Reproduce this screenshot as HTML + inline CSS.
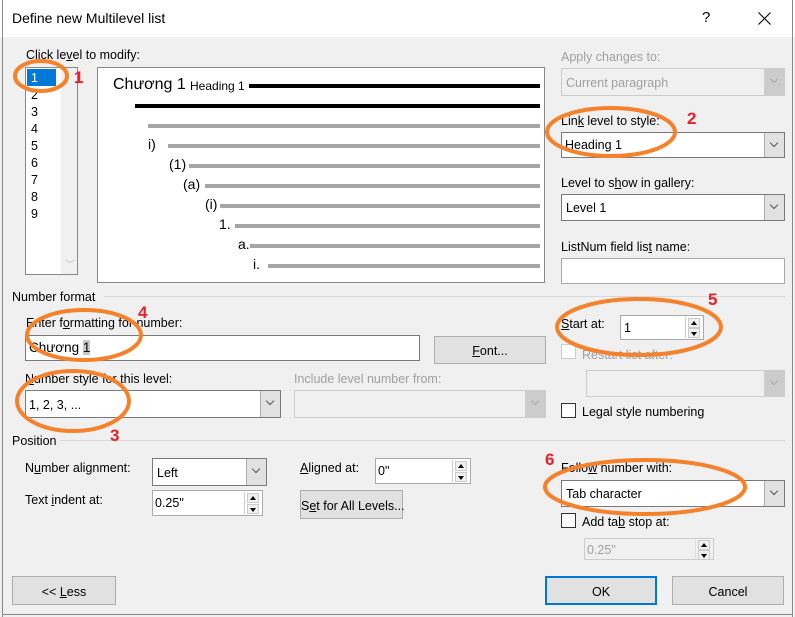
<!DOCTYPE html>
<html><head><meta charset="utf-8"><style>
*{margin:0;padding:0;box-sizing:border-box}
body{width:795px;height:617px;background:#f0f0f0;font-family:"Liberation Sans",sans-serif;font-size:12.5px;color:#000;position:relative;overflow:hidden}
.a{position:absolute;white-space:nowrap}
.box{position:absolute;background:#fff;border:1px solid #7a7a7a}
.dis{position:absolute;background:#f0f0f0;border:1px solid #ccc}
.dd{position:absolute;top:0;right:0;bottom:0;width:20px;background:#e1e1e1;border-left:1px solid #adadad}
.dd:after{content:"";position:absolute;left:6px;top:7px;width:5px;height:5px;border-right:1px solid #555;border-bottom:1px solid #555;transform:rotate(45deg)}
.dis .dd{background:#ccc;border-left:1px solid #ccc}
.dis .dd:after{border-color:#aaa}
.btn{position:absolute;background:#e1e1e1;border:1px solid #adadad;text-align:center;white-space:nowrap}
.gray{color:#a0a0a0}
.spin{position:absolute;top:1px;right:1px;bottom:1px;width:17px;border-left:1px solid #ccc}
.spin i{position:absolute;left:2px;width:12px;height:10px;background:#f0f0f0;border:1px solid #ccc}
.up:after,.dn:after{content:"";position:absolute;left:2px;border-left:3.5px solid transparent;border-right:3.5px solid transparent}
.up:after{top:2px;border-bottom:4px solid #000}
.dn:after{top:3px;border-top:4px solid #000}
.chk{position:absolute;width:15px;height:15px;background:#fff;border:1px solid #333}
.bar{position:absolute;height:4px;background:#a6a6a6}
.bk{position:absolute;height:4px;background:#000}
.sep{position:absolute;height:1px;background:#d8d8d8}
u{text-decoration:underline}
</style></head><body>
<div class="a" style="left:0;top:0;width:795px;height:37px;background:#fff"></div>
<div class="a" style="left:2px;top:0;width:1px;height:617px;background:#888"></div>
<div class="a" style="left:792px;top:0;width:1px;height:617px;background:#888"></div>
<div class="a" style="left:2px;top:614px;width:791px;height:1px;background:#888"></div>
<div class="a" style="left:12px;top:10px;font-size:14px">Define new Multilevel list</div>
<div class="a" style="left:702px;top:9px;font-size:15px">?</div>
<svg class="a" style="left:758px;top:12px" width="13" height="13"><path d="M0.5 0.5L12.5 12.5M12.5 0.5L0.5 12.5" stroke="#000" stroke-width="1.1"/></svg>

<div class="a" style="left:26px;top:48px">Click le<u>v</u>el to modify:</div>
<div class="box" style="left:25px;top:67px;width:53px;height:208px;border-color:#888">
 <div class="a" style="left:35px;top:0;width:16px;height:206px;background:#f0f0f0"></div>
 <div class="a" style="left:1px;top:1px;width:29px;height:17px;background:#0078d7"></div>
 <div class="a" style="left:5px;top:3px;color:#fff">1</div>
 <div class="a" style="left:5px;top:20px">2</div>
 <div class="a" style="left:5px;top:37px">3</div>
 <div class="a" style="left:5px;top:54px">4</div>
 <div class="a" style="left:5px;top:71px">5</div>
 <div class="a" style="left:5px;top:88px">6</div>
 <div class="a" style="left:5px;top:105px">7</div>
 <div class="a" style="left:5px;top:122px">8</div>
 <div class="a" style="left:5px;top:139px">9</div>
 <div class="a" style="left:39px;top:188px;color:#bbb;font-size:10px">﹀</div>
</div>

<div class="box" style="left:97px;top:67px;width:448px;height:216px;border-color:#888">
 <div class="a" style="left:15px;top:8px;font-size:16px">Chương 1</div>
 <div class="a" style="left:92px;top:11px;font-size:12px">Heading 1</div>
 <div class="bk" style="left:151px;top:16px;width:291px"></div>
 <div class="bk" style="left:37px;top:36px;width:405px"></div>
 <div class="bar" style="left:50px;top:56px;width:392px"></div>
 <div class="a" style="left:50px;top:68px;font-size:14px">i)</div>
 <div class="bar" style="left:70px;top:76px;width:372px"></div>
 <div class="a" style="left:71px;top:88px;font-size:14px">(1)</div>
 <div class="bar" style="left:91px;top:96px;width:351px"></div>
 <div class="a" style="left:85px;top:108px;font-size:14px">(a)</div>
 <div class="bar" style="left:107px;top:116px;width:335px"></div>
 <div class="a" style="left:107px;top:128px;font-size:14px">(i)</div>
 <div class="bar" style="left:122px;top:136px;width:320px"></div>
 <div class="a" style="left:121px;top:148px;font-size:14px">1.</div>
 <div class="bar" style="left:137px;top:156px;width:305px"></div>
 <div class="a" style="left:140px;top:168px;font-size:14px">a.</div>
 <div class="bar" style="left:152px;top:176px;width:290px"></div>
 <div class="a" style="left:155px;top:188px;font-size:14px">i.</div>
 <div class="bar" style="left:170px;top:196px;width:272px"></div>
</div>

<div class="a gray" style="left:561px;top:50px">Apply changes to:</div>
<div class="dis" style="left:561px;top:68px;width:224px;height:28px"><div class="a gray" style="left:4px;top:7px">Current paragraph</div><div class="dd"></div></div>
<div class="a" style="left:561px;top:114px">Lin<u>k</u> level to style:</div>
<div class="box" style="left:561px;top:132px;width:224px;height:26px"><div class="a" style="left:3px;top:5px">Heading 1</div><div class="dd"></div></div>
<div class="a" style="left:561px;top:176px">Level to s<u>h</u>ow in gallery:</div>
<div class="box" style="left:561px;top:194px;width:224px;height:27px"><div class="a" style="left:4px;top:6px">Level 1</div><div class="dd"></div></div>
<div class="a" style="left:561px;top:240px">ListNum field lis<u>t</u> name:</div>
<div class="box" style="left:561px;top:258px;width:224px;height:26px;border-color:#aaa"></div>

<div class="a" style="left:12px;top:290px">Number format</div>
<div class="sep" style="left:104px;top:296px;width:681px"></div>
<div class="a" style="left:26px;top:316px">Enter f<u>o</u>rmatting for number:</div>
<div class="box" style="left:25px;top:335px;width:395px;height:26px"><div class="a" style="left:3px;top:4px;font-size:13.5px">Chương <span style="background:#c8c8c8">1</span></div></div>
<div class="btn" style="left:434px;top:336px;width:112px;height:28px;padding-top:7px"><u>F</u>ont...</div>

<div class="a" style="left:561px;top:317px"><u>S</u>tart at:</div>
<div class="box" style="left:620px;top:315px;width:84px;height:25px;border-color:#aaa"><div class="a" style="left:3px;top:5px">1</div><div class="spin"><i class="up" style="top:1px"></i><i class="dn" style="top:11px"></i></div></div>
<div class="chk" style="left:561px;top:344px;border-color:#ccc"></div>
<div class="a gray" style="left:582px;top:348px">Restart list after:</div>
<div class="dis" style="left:586px;top:370px;width:199px;height:27px"><div class="dd"></div></div>
<div class="chk" style="left:561px;top:403px"></div>
<div class="a" style="left:582px;top:405px">Le<u>g</u>al style numbering</div>

<div class="a" style="left:25px;top:372px"><u>N</u>umber style for this level:</div>
<div class="box" style="left:25px;top:390px;width:256px;height:28px"><div class="a" style="left:3px;top:7px">1, 2, 3, ...</div><div class="dd"></div></div>
<div class="a gray" style="left:294px;top:372px">Include level number from:</div>
<div class="dis" style="left:294px;top:390px;width:252px;height:28px"><div class="dd"></div></div>

<div class="a" style="left:12px;top:434px">Position</div>
<div class="sep" style="left:60px;top:440px;width:725px"></div>
<div class="a" style="left:25px;top:461px">N<u>u</u>mber alignment:</div>
<div class="box" style="left:152px;top:458px;width:115px;height:28px"><div class="a" style="left:4px;top:7px">Left</div><div class="dd"></div></div>
<div class="a" style="left:300px;top:461px"><u>A</u>ligned at:</div>
<div class="box" style="left:375px;top:458px;width:96px;height:26px;border-color:#aaa"><div class="a" style="left:2px;top:5px">0"</div><div class="spin"><i class="up" style="top:1px"></i><i class="dn" style="top:12px"></i></div></div>
<div class="a" style="left:25px;top:493px">Text <u>i</u>ndent at:</div>
<div class="box" style="left:152px;top:490px;width:111px;height:26px;border-color:#aaa"><div class="a" style="left:2px;top:5px">0.25"</div><div class="spin"><i class="up" style="top:1px"></i><i class="dn" style="top:12px"></i></div></div>
<div class="btn" style="left:300px;top:490px;width:103px;height:29px;padding-top:8px">S<u>e</u>t for All Levels...</div>

<div class="a" style="left:561px;top:461px">Follo<u>w</u> number with:</div>
<div class="box" style="left:561px;top:480px;width:224px;height:27px"><div class="a" style="left:4px;top:6px">Tab character</div><div class="dd"></div></div>
<div class="chk" style="left:561px;top:513px"></div>
<div class="a" style="left:582px;top:515px">Add ta<u>b</u> stop at:</div>
<div class="box" style="left:584px;top:538px;width:130px;height:22px;border-color:#ccc;background:#f0f0f0"><div class="a gray" style="left:2px;top:4px">0.25"</div><div class="spin" style="border-left-color:#ddd"><i class="up" style="top:0;height:10px"></i><i class="dn" style="top:10px;height:10px"></i></div></div>

<div class="btn" style="left:12px;top:576px;width:104px;height:29px;padding-top:8px">&lt;&lt; <u>L</u>ess</div>
<div class="btn" style="left:545px;top:576px;width:112px;height:29px;padding-top:7px;border:2px solid #0078d7">OK</div>
<div class="btn" style="left:672px;top:576px;width:112px;height:29px;padding-top:8px">Cancel</div>

<svg class="a" style="left:0;top:0" width="795" height="617">
<g fill="none" stroke="#f5822a" stroke-width="4">
<ellipse cx="41" cy="76" rx="26" ry="15"/>
<ellipse cx="611" cy="132" rx="64" ry="24"/>
<ellipse cx="84" cy="335" rx="57" ry="25"/>
<ellipse cx="73" cy="401" rx="56" ry="30"/>
<ellipse cx="639" cy="327" rx="82" ry="28"/>
<ellipse cx="645" cy="487" rx="100" ry="27"/>
</g>
<g fill="#e8202a" font-family="Liberation Sans" font-weight="bold" font-size="17">
<text x="74" y="83">1</text><text x="687" y="124">2</text><text x="138" y="318">4</text>
<text x="110" y="441">3</text><text x="708" y="305">5</text><text x="545" y="465">6</text>
</g></svg>
</body></html>
